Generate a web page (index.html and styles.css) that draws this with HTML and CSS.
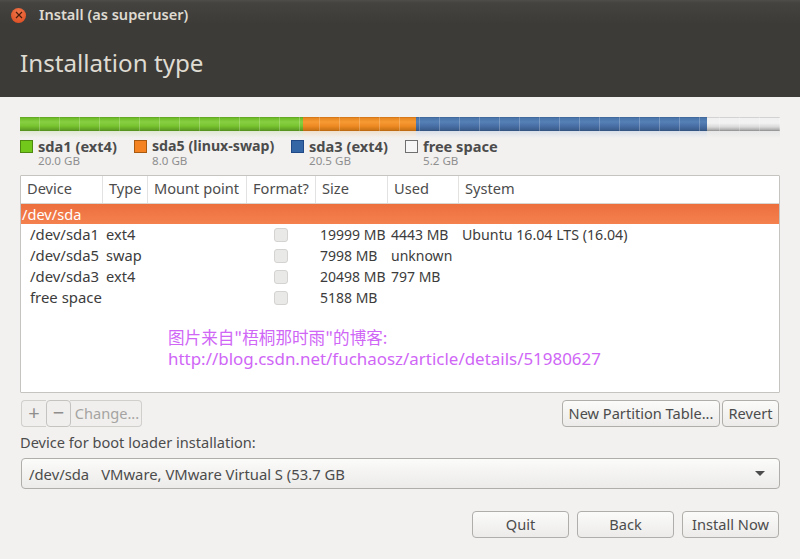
FILE: index.html
```html
<!DOCTYPE html>
<html lang="en">
<head>
<meta charset="utf-8">
<title>Install (as superuser)</title>
<link rel="stylesheet" href="styles.css">
</head>
<body>
<div class="window">
  <header class="header">
    <div class="titlebar">
      <span class="close"><svg width="10" height="10" viewBox="0 0 10 10"><path d="M2 2l6 6M8 2l-6 6" stroke="#4a1c0c" stroke-width="1.2" fill="none"/></svg></span>
      <span class="wintitle">Install (as superuser)</span>
    </div>
    <h1 class="pagetitle">Installation type</h1>
  </header>
  <main class="content">
    <div class="bar">
      <div class="seg seg-green"></div>
      <div class="seg seg-orange"></div>
      <div class="seg seg-blue"></div>
      <div class="seg seg-free"></div>
    </div>
    <div class="legend">
      <div class="lg lg1"><span class="swatch sw-green"></span><div><div class="lg-name">sda1 (ext4)</div><div class="lg-size">20.0 GB</div></div></div>
      <div class="lg lg2"><span class="swatch sw-orange"></span><div><div class="lg-name">sda5 (linux-swap)</div><div class="lg-size">8.0 GB</div></div></div>
      <div class="lg lg3"><span class="swatch sw-blue"></span><div><div class="lg-name">sda3 (ext4)</div><div class="lg-size">20.5 GB</div></div></div>
      <div class="lg lg4"><span class="swatch sw-free"></span><div><div class="lg-name">free space</div><div class="lg-size">5.2 GB</div></div></div>
    </div>
    <div class="table">
      <div class="row head">
        <div class="c c1">Device</div><div class="c c2">Type</div><div class="c c3">Mount point</div><div class="c c4">Format?</div><div class="c c5">Size</div><div class="c c6">Used</div><div class="c c7">System</div>
      </div>
      <div class="row selected"><div class="c">/dev/sda</div></div>
      <div class="row body"><div class="c c1">/dev/sda1</div><div class="c c2">ext4</div><div class="c c3"></div><div class="c c4"><span class="check"></span></div><div class="c c5">19999 MB</div><div class="c c6">4443 MB</div><div class="c c7">Ubuntu 16.04 LTS (16.04)</div></div>
      <div class="row body"><div class="c c1">/dev/sda5</div><div class="c c2">swap</div><div class="c c3"></div><div class="c c4"><span class="check"></span></div><div class="c c5">7998 MB</div><div class="c c6">unknown</div><div class="c c7"></div></div>
      <div class="row body"><div class="c c1">/dev/sda3</div><div class="c c2">ext4</div><div class="c c3"></div><div class="c c4"><span class="check"></span></div><div class="c c5">20498 MB</div><div class="c c6">797 MB</div><div class="c c7"></div></div>
      <div class="row body"><div class="c c1">free space</div><div class="c c2"></div><div class="c c3"></div><div class="c c4"><span class="check"></span></div><div class="c c5">5188 MB</div><div class="c c6"></div><div class="c c7"></div></div>
      <div class="watermark">
        <div class="wm-cjk">图片来自"梧桐那时雨"的博客:</div>
        <div class="wm-url">http://blog.csdn.net/fuchaosz/article/details/51980627</div>
      </div>
    </div>
    <div class="toolbar">
      <div class="tool-group">
        <button class="btn tool-sq disabled">+</button>
        <button class="btn tool-sq disabled minus">−</button>
        <button class="btn tool-change disabled">Change...</button>
      </div>
      <div class="tool-right">
        <button class="btn tool-new">New Partition Table...</button>
        <button class="btn tool-revert">Revert</button>
      </div>
    </div>
    <label class="boot-label">Device for boot loader installation:</label>
    <div class="combo">
      <span class="combo-text"><span class="combo-dev">/dev/sda</span>VMware, VMware Virtual S (53.7 GB</span>
      <span class="arrow"></span>
    </div>
    <div class="footer">
      <button class="btn foot">Quit</button>
      <button class="btn foot">Back</button>
      <button class="btn foot">Install Now</button>
    </div>
  </main>
</div>
</body>
</html>
```
FILE: styles.css
```css
* { box-sizing: border-box; }
html, body { margin: 0; padding: 0; }
body {
  width: 800px;
  height: 559px;
  overflow: hidden;
  background: #f2f1f0;
  font-family: "Noto Sans", "Open Sans", sans-serif;
  font-size: 14.6px;
  color: #4c4c4c;
}
.window { display: flex; flex-direction: column; height: 559px; }

.header {
  height: 97px;
  background: linear-gradient(#4f4d49 0, #45433f 3px, #3d3b37 24px, #3c3b37 100%);
  padding: 0 0 0 11px;
}
.titlebar { display: flex; align-items: center; height: 30px; }
.close {
  width: 15px; height: 15px; border-radius: 50%;
  background: radial-gradient(circle at 50% 30%, #f2764a, #d9491d);
  display: flex; align-items: center; justify-content: center;
}
.wintitle { margin: -2px 0 0 13px; font-size: 14.6px; font-weight: 600; color: #dfdbd2; }
.pagetitle {
  margin: 15px 0 0 9px;
  font-size: 24.2px;
  line-height: 36px;
  font-weight: 400;
  color: #dfdbd2;
}

.content { flex: 1; padding: 20px 20px 0; display: flex; flex-direction: column; }

.bar { display: flex; height: 21px; position: relative; width: 760px; }
.bar::before {
  content: ""; position: absolute; left: 0; right: 0; top: 0; height: 14px; z-index: 1;
  background: repeating-linear-gradient(90deg, transparent 0, transparent 19px, rgba(255,255,255,.22) 19px, rgba(255,255,255,.22) 20px);
}
.seg { height: 21px; }
.seg-green { width: 283px; background: linear-gradient(#5d9a22 0, #6dbb27 1px, #88cf43 5px, #78c430 9px, #5e9c24 13px, #4f8a1a 14px, #dfe8d2 14px, #f2f1f0 21px); }
.seg-orange { width: 113px; background: linear-gradient(#c76b12 0, #e88721 1px, #f69a34 5px, #ee8a23 9px, #c97316 13px, #b6650e 14px, #efe0cc 14px, #f2f1f0 21px); }
.seg-blue { width: 291px; background: linear-gradient(#3c5f8f 0, #4a75ab 1px, #5580b5 5px, #486fa6 9px, #3b5d8c 13px, #2f4d78 14px, #d8dfe8 14px, #f2f1f0 21px); }
.seg-free { width: 73px; background: linear-gradient(#b5b5b5 0, #f0f0f0 1px, #f2f2f2 6px, #d8d8d8 10px, #a9a9a9 13px, #8a8a8a 14px, #e6e6e6 14px, #f2f1f0 21px); }

.legend { display: flex; height: 36px; margin-top: 1px; }
.lg { display: flex; align-items: flex-start; }
.lg1 { width: 114px; } .lg2 { width: 157px; } .lg3 { width: 114px; }
.swatch { width: 13px; height: 13px; margin: 1px 5px 0 0; border: 1px solid; flex: none; }
.sw-green { background: #72c91c; border-color: #4f8a10; }
.sw-orange { background: #f58220; border-color: #a85a10; }
.sw-blue { background: #3465a4; border-color: #204a87; }
.sw-free { background: #f6f6f6; border-color: #6f6f6f; }
.lg-name { font-weight: 700; font-size: 14.6px; line-height: 14px; color: #4c4c4c; }
.lg2 .lg-name { font-size: 14.2px; }
.lg-size { font-size: 11.6px; line-height: 15px; color: #8f8f8f; }

.table {
  position: relative;
  width: 760px; height: 218px;
  background: #fff;
  border: 1px solid #c6c4c1;
  border-radius: 1px;
}
.row { display: flex; }
.head { height: 28px; line-height: 24px; border-bottom: 1px solid #d8d6d3; }
.head .c { padding-left: 6px; border-right: 1px solid #e3e2e0; }
.head .c7 { border-right: 0; }
.c1 { width: 82px; } .c2 { width: 45px; } .c3 { width: 99px; } .c4 { width: 69px; }
.c5 { width: 72px; } .c6 { width: 71px; } .c7 { flex: 1; }
.selected {
  height: 20px; line-height: 21px; color: #fff;
  background: linear-gradient(#ed6f3e, #f4814f);
}
.selected .c { padding-left: 1px; }
.body { height: 21px; line-height: 21px; color: #3c3c3c; }
.body .c { white-space: nowrap; }
.body .c1 { padding-left: 9px; font-size: 14.9px; }
.body .c2 { padding-left: 3px; }
.body .c4 { display: flex; align-items: center; justify-content: center; padding-right: 2px; }
.body .c5 { padding-left: 4px; font-size: 14px; }
.body .c6 { padding-left: 3px; font-size: 14px; }
.body .c7 { padding-left: 3px; font-size: 14.2px; }
.check {
  width: 14px; height: 14px; border-radius: 3px;
  background: #e9e9e8; border: 1px solid #d4d3d1;
}
.watermark {
  position: absolute; left: 147px; top: 151px;
  color: #cf66f6;
}
.wm-cjk { font-size: 16.6px; line-height: 21px; font-family: "Noto Sans CJK SC", "Liberation Sans", sans-serif; white-space: nowrap; }
.wm-url { font-size: 16.95px; line-height: 21px; font-family: "Noto Sans", sans-serif; white-space: nowrap; }

.btn {
  font: inherit; font-size: 14.6px; color: #4c4c4c; padding: 0 0 2px;
  border: 1px solid #b0aeaa; border-radius: 4px;
  background: linear-gradient(#fbfbfa, #ecebe9);
}
.btn.disabled { color: #a5a4a2; border-color: #d0cfcc; background: #f0efed; }
.toolbar { display: flex; justify-content: space-between; margin: 7px 1px 0; height: 27px; }
.tool-group, .tool-right { display: flex; }
.tool-sq { width: 25px; height: 27px; font-size: 20px; line-height: 20px; color: #8f8e8c !important; }
.tool-group .tool-sq:first-child { border-radius: 4px 0 0 4px; border-right: 0; }
.btn.minus { position: relative; z-index: 1; border-color: #c4c3c0; }
.tool-change { width: 72px; margin-left: -1px; padding-left: 3px; border-radius: 0 4px 4px 0; border-left: 0; }
.tool-new { width: 158px; }
.tool-revert { width: 57px; margin-left: 2px; }
.boot-label { display: block; margin-top: 5px; line-height: 20px; }
.combo {
  display: flex; align-items: center; justify-content: space-between;
  height: 31px; width: 759px; margin: 6px 0 0 1px; padding: 0 14px 0 7px;
  border: 1px solid #b0aeaa; border-radius: 4px;
  background: linear-gradient(#fbfbfa, #ecebe9);
  font-size: 14.8px;
}
.combo-dev { margin-right: 12px; }
.arrow { width: 0; height: 0; border-left: 5px solid transparent; border-right: 5px solid transparent; border-top: 5px solid #4c4c4c; }
.footer { display: flex; justify-content: flex-end; gap: 8px; margin-top: 22px; margin-right: 1px; }
.foot { width: 97px; height: 27px; }
```
